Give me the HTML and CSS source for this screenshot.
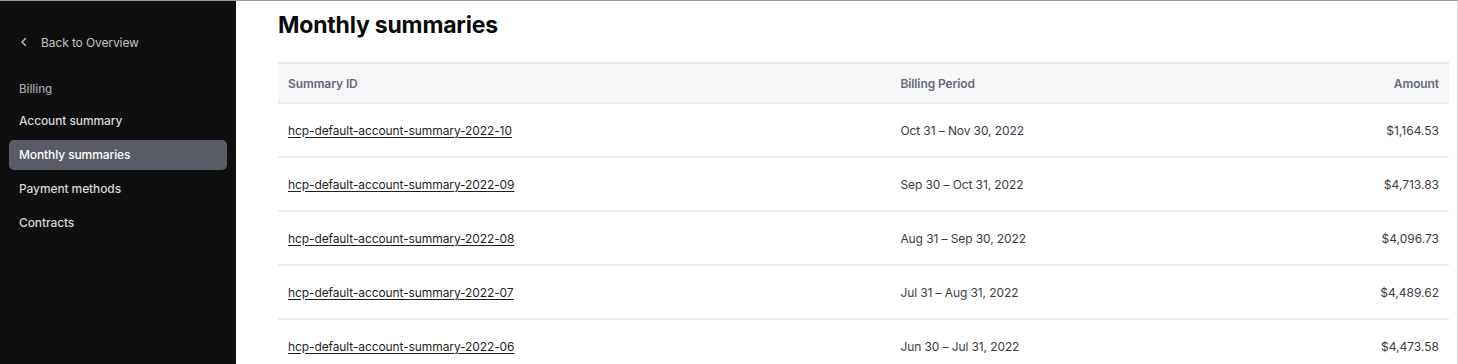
FILE: index.html
```html
<!DOCTYPE html>
<html lang="en">
<head>
    <meta charset="UTF-8">
    <meta name="viewport" content="width=device-width, initial-scale=1.0">
    <title>Monthly summaries</title>
    <link rel="stylesheet" href="styles.css">
</head>
<body>
    <div class="app">
        <!-- Sidebar -->
        <nav class="sidebar">
            <a class="back-link" href="#">
                <svg width="8" height="10" viewBox="0 0 8 10" aria-hidden="true">
                    <path d="M5.5 1.5 L2 5 L5.5 8.5" fill="none" stroke="currentColor" stroke-width="1.4" stroke-linecap="round" stroke-linejoin="round"/>
                </svg>
                <span>Back to Overview</span>
            </a>
            <div class="nav-group">Billing</div>
            <ul class="nav-list">
                <li><a class="nav-item" href="#">Account summary</a></li>
                <li><a class="nav-item active" href="#">Monthly summaries</a></li>
                <li><a class="nav-item" href="#">Payment methods</a></li>
                <li><a class="nav-item" href="#">Contracts</a></li>
            </ul>
        </nav>

        <!-- Main content -->
        <main class="content">
            <h1>Monthly summaries</h1>
            <table class="summaries">
                <thead>
                    <tr>
                        <th class="col-id">Summary ID</th>
                        <th class="col-period">Billing Period</th>
                        <th class="col-amount">Amount</th>
                    </tr>
                </thead>
                <tbody>
                    <tr>
                        <td><a href="#">hcp-default-account-summary-2022-10</a></td>
                        <td>Oct 31 – Nov 30, 2022</td>
                        <td class="col-amount">$1,164.53</td>
                    </tr>
                    <tr>
                        <td><a href="#">hcp-default-account-summary-2022-09</a></td>
                        <td>Sep 30 – Oct 31, 2022</td>
                        <td class="col-amount">$4,713.83</td>
                    </tr>
                    <tr>
                        <td><a href="#">hcp-default-account-summary-2022-08</a></td>
                        <td>Aug 31 – Sep 30, 2022</td>
                        <td class="col-amount">$4,096.73</td>
                    </tr>
                    <tr>
                        <td><a href="#">hcp-default-account-summary-2022-07</a></td>
                        <td>Jul 31 – Aug 31, 2022</td>
                        <td class="col-amount">$4,489.62</td>
                    </tr>
                    <tr>
                        <td><a href="#">hcp-default-account-summary-2022-06</a></td>
                        <td>Jun 30 – Jul 31, 2022</td>
                        <td class="col-amount">$4,473.58</td>
                    </tr>
                </tbody>
            </table>
        </main>
    </div>
</body>
</html>
```

FILE: styles.css
```css
html, body {
    margin: 0;
    padding: 0;
    height: 100%;
    overflow: hidden;
}
body {
    font-family: Inter, "Noto Sans", sans-serif;
    background-color: #ffffff;
    border-top: 1px solid #9a9a9a;
    box-sizing: border-box;
}
.app {
    display: flex;
    height: 100%;
}
.sidebar {
    width: 236px;
    flex-shrink: 0;
    background-color: #0f0f10;
    padding: 26px 9px 0;
    box-sizing: border-box;
}
.back-link {
    display: flex;
    align-items: center;
    gap: 13px;
    padding: 0 10px 0 11px;
    height: 30px;
    color: #c2c2c6;
    text-decoration: none;
    font-size: 12px;
    letter-spacing: -0.1px;
}
.nav-group {
    margin-top: 17px;
    padding: 0 10px;
    height: 30px;
    line-height: 30px;
    color: #a2a2aa;
    font-size: 11.5px;
    font-weight: 500;
}
.nav-list {
    list-style: none;
    margin: 2px 0 0;
    padding: 0;
    display: flex;
    flex-direction: column;
    gap: 4px;
}
.nav-item {
    display: block;
    height: 30px;
    line-height: 30px;
    padding: 0 10px;
    border-radius: 5px;
    color: #d6d6d9;
    text-decoration: none;
    font-size: 12px;
    font-weight: 500;
    letter-spacing: -0.1px;
}
.nav-item.active {
    background-color: #595c66;
    color: #ffffff;
}
.content {
    flex: 1;
    padding: 0 8px 0 42px;
    border-right: 1px solid #d8d8d8;
}
h1 {
    margin: 9px 0 0;
    height: 30px;
    line-height: 30px;
    font-size: 23px;
    font-weight: 700;
    color: #0a0a0a;
    letter-spacing: -0.2px;
}
.summaries {
    width: 100%;
    margin-top: 22px;
    border-collapse: collapse;
    font-size: 12px;
    letter-spacing: -0.1px;
}
.summaries th {
    background-color: #f7f7f9;
    color: #656a76;
    font-weight: 600;
    text-align: left;
    height: 38px;
    padding: 0 10px;
    border-top: 2px solid #ebebee;
    border-bottom: 2px solid #ebebee;
}
.summaries td {
    height: 52px;
    padding: 0 10px;
    color: #3b3d45;
    border-bottom: 2px solid #efeff1;
}
.summaries td a {
    color: #1f1f23;
    text-decoration: underline;
    text-underline-offset: 2px;
}
.col-id {
    width: 52.3%;
}
.col-amount {
    text-align: right !important;
}
td.col-amount {
    letter-spacing: 0;
}
```
